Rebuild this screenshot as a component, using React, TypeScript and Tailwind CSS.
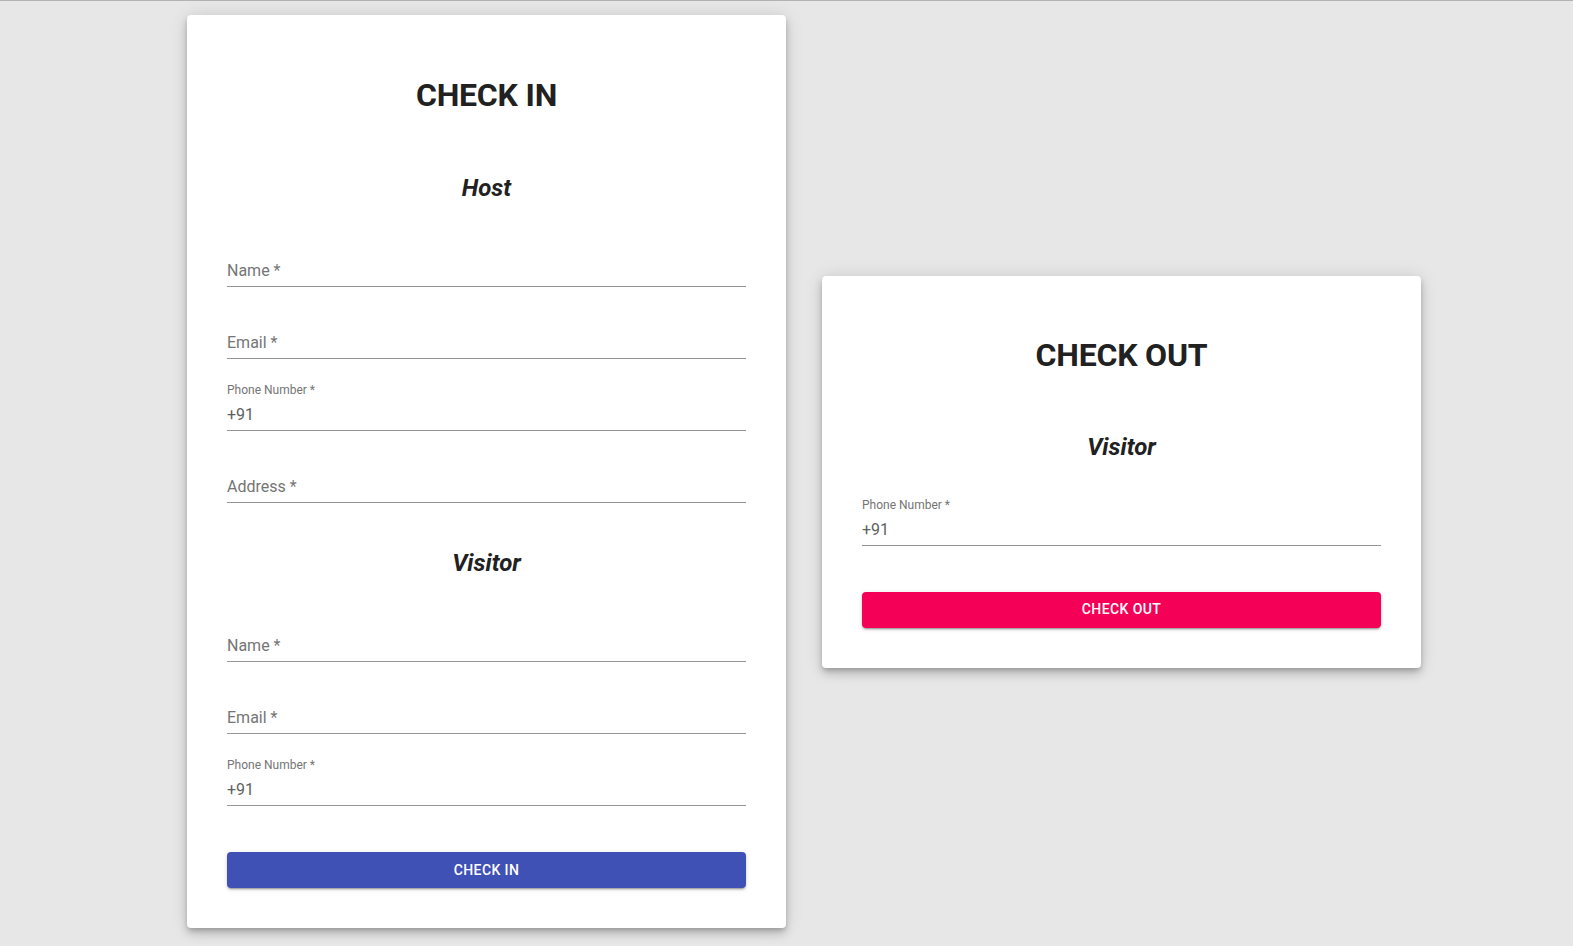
import React from "react";

const font = { fontFamily: "Roboto, 'Liberation Sans', sans-serif" };

interface FieldProps {
  label: string;
  value?: string;
  first?: boolean;
}

function Field({ label, value, first }: FieldProps) {
  return (
    <div className={first ? "relative mt-[37px] h-[48px] pt-[16px]" : "relative mt-[24px] h-[48px] pt-[16px]"}>
      {value ? (
        <div className="absolute left-0 top-[1px] text-[12px] leading-[12px] text-[#757575]">
          {label}
        </div>
      ) : (
        <div className="absolute left-0 top-[24px] text-[16px] leading-[16px] text-[#757575]">
          {label}
        </div>
      )}
      <div className="h-[32px] border-b border-[#949494] pt-[6px] text-[16px] leading-[19px] text-[#5f5f5f]">
        {value}
      </div>
    </div>
  );
}

function Heading({ children, mt }: { children: React.ReactNode; mt: string }) {
  return (
    <h5 className={`${mt} h-[28px] text-center text-[24px] font-bold italic leading-[28px] text-[#212121]`}>
      {children}
    </h5>
  );
}

function Title({ children, mt }: { children: React.ReactNode; mt: string }) {
  return (
    <h4 className={`${mt} h-[38px] text-center text-[32px] font-bold leading-[38px] tracking-[-0.2px] text-[#212121]`}>
      {children}
    </h4>
  );
}

function ActionButton({ label, color }: { label: string; color: "blue" | "pink" }) {
  return (
    <button
      className={
        color === "blue"
          ? "mt-[46px] h-[36px] w-full rounded-[4px] bg-[#3f51b5] text-[14px] font-medium uppercase tracking-[0.4px] text-white shadow-[0_3px_1px_-2px_rgba(0,0,0,0.2),0_2px_2px_0_rgba(0,0,0,0.14),0_1px_5px_0_rgba(0,0,0,0.12)]"
          : "mt-[46px] h-[36px] w-full rounded-[4px] bg-[#f50057] text-[14px] font-medium uppercase tracking-[0.4px] text-white shadow-[0_3px_1px_-2px_rgba(0,0,0,0.2),0_2px_2px_0_rgba(0,0,0,0.14),0_1px_5px_0_rgba(0,0,0,0.12)]"
      }
    >
      {label}
    </button>
  );
}

const cardClass =
  "w-[599px] rounded-[4px] bg-white px-[40px] pb-[40px] shadow-[0_3px_5px_-1px_rgba(0,0,0,0.2),0_6px_10px_0_rgba(0,0,0,0.14),0_1px_18px_0_rgba(0,0,0,0.12)]";

export default function App() {
  return (
    <div style={font} className="min-h-[946px] border-t border-[#b2b2b2] bg-[#e7e7e7]">
      <div className="flex items-center gap-[36px] pl-[187px] pt-[14px]">
        <div className={cardClass}>
          <Title mt="mt-[61px]">CHECK IN</Title>
          <Heading mt="mt-[60px]">Host</Heading>
          <Field label="Name *" first />
          <Field label="Email *" />
          <Field label="Phone Number *" value="+91" />
          <Field label="Address *" />
          <Heading mt="mt-[46px]">Visitor</Heading>
          <Field label="Name *" first />
          <Field label="Email *" />
          <Field label="Phone Number *" value="+91" />
          <ActionButton label="Check in" color="blue" />
        </div>

        <div className={cardClass}>
          <Title mt="mt-[60px]">CHECK OUT</Title>
          <Heading mt="mt-[59px]">Visitor</Heading>
          <Field label="Phone Number *" value="+91" first />
          <ActionButton label="Check out" color="pink" />
        </div>
      </div>
    </div>
  );
}
